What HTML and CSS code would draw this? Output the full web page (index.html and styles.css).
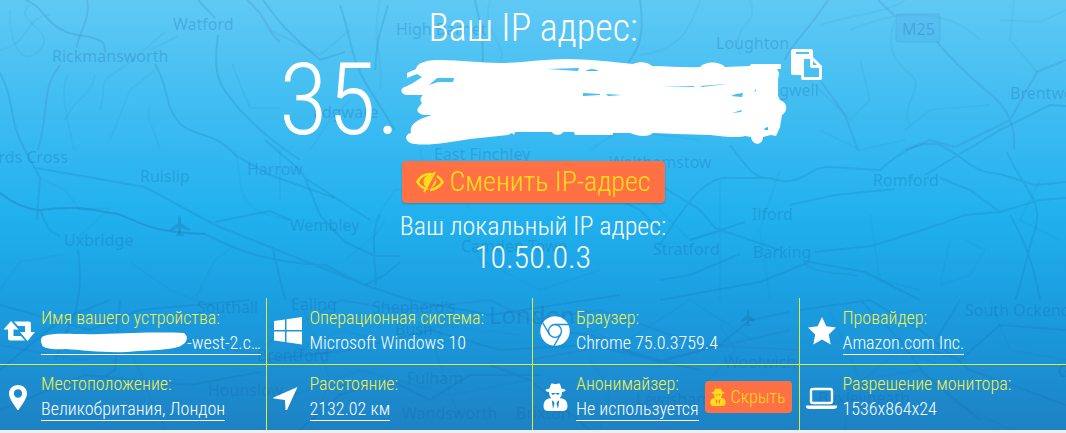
FILE: index.html
```html
<!DOCTYPE html>
<html lang="ru">
<head>
<meta charset="utf-8">
<meta name="viewport" content="width=device-width, initial-scale=1">
<title>Ваш IP адрес</title>
<link rel="stylesheet" href="styles.css">
</head>
<body>
<svg class="symbols" aria-hidden="true">
  <symbol id="spy" viewBox="0 0 24 28">
    <path fill="currentColor" fill-rule="evenodd" d="M7.500 1C8.600 0 10 1.200 12 1.200S15.400 0 16.500 1L18 5.500C20.500 6 22 6.600 22 7.300C22 8 20.700 8.600 18.500 9.100C18.400 12 17.600 14 16.200 15.300L19 15.600C22 16.500 24 19 24 23C24 26 22.500 28 19 28H5C1.500 28 0 26 0 23C0 19 2 16.500 5 15.600L7.800 15.300C6.400 14 5.600 12 5.500 9.100C3.300 8.600 2 8 2 7.300C2 6.600 3.500 6 6 5.500ZM8.300 17.300L9.500 26L11 20.500L10.300 18.700ZM15.700 17.300L13.700 18.700L13 20.500L14.500 26ZM8 10C8 12.300 10.800 12.300 11.400 10.500H12.600C13.200 12.300 16 12.300 16 10Z"/>
  </symbol>
</svg>
<main class="page">
  <svg class="map" viewBox="0 0 1066 430" preserveAspectRatio="xMidYMid slice" aria-hidden="true">
    <g class="roads minor">
      <path d="M10 10C8 40 22 70 40 50S10 20 30 5M68 75C60 90 65 110 74 150M100 110C110 75 90 90 130 62L165 32M150 50L178 36M232 64L250 108H280M150 105C145 120 155 130 160 150M380 0C370 40 385 60 380 90M490 0C480 30 510 50 500 60M700 0C690 30 680 50 640 55M740 55C730 20 760 30 750 0M905 0C890 12 850 15 820 25M850 30C920 0 960 20 980 40M895 20C880 60 910 70 915 80S900 110 910 125M1014 0L1010 40L1037 72"/>
      <path d="M40 178L65 190L80 210L110 208L78 238M0 290L20 262L65 254M130 262L170 290L220 310M15 345L90 310L130 350L165 430M195 300L215 260L235 245M235 150C245 190 230 210 290 220M280 150V200M375 220L395 190L420 188M345 260L375 235L385 220M420 150C430 200 460 180 470 210M465 230L480 260L540 290L600 270M650 200L690 240L720 232M720 180V300M780 170L760 230L770 300M870 215L880 280L920 290M965 240L985 250L970 275L940 285L950 240M820 130L860 150L905 140M1040 180L1020 220L1060 240"/>
      <path d="M270 325L300 350L340 330L400 345L440 325L520 335M280 400L360 370L450 395L530 380M300 300L330 380L310 430M450 300L435 350L460 420M570 320L620 345L690 300L760 345M600 310L590 360L610 390L600 430M720 325L735 350L700 390L790 400M830 310L860 380L920 370M845 430L850 390L900 350L940 365M990 300L1010 350L1066 360M950 400L1010 430"/>
      <path d="M0 50C30 45 25 15 50 15M65 120C80 90 90 100 95 75M110 140L130 90L155 70M270 30L320 55L350 30M310 150L330 120L350 100M590 150L620 130L700 140M810 80L850 120L870 100L860 60M905 130L930 110L990 105M1066 10L1040 22L1000 20"/>
    </g>
    <g class="roads">
      <path d="M25 0C45 5 45 30 78 35S102 45 106 53M155 64C170 90 163 100 177 120C190 138 215 130 235 155L270 175L335 198M218 35C212 80 220 85 240 110C260 130 270 140 300 160M198 0L215 18M263 0C290 40 320 58 320 60L345 52M340 5C352 40 350 60 370 90L395 130M388 5L378 40L375 70M475 0C480 20 485 50 482 70M640 0C645 35 640 50 622 70"/>
      <path d="M0 73C15 100 8 120 25 150L40 178L37 220M36 168L145 187L215 225L365 285L385 275L400 262M0 193Q20 209 40 210C80 205 90 210 118 214C140 222 148 232 205 234C235 250 270 263 325 265L365 285M40 210C45 220 45 230 60 236M215 222L270 211L290 220M265 140L300 170L305 178L320 215L345 242L375 256H400M305 178L370 220M380 215C370 230 375 260 376 285M273 250L285 300M78 250C80 270 82 280 76 310L55 360"/>
      <path d="M660 230L640 210L600 190M660 280L690 275L740 254M660 185L700 210L715 228L780 250M690 240L745 222M790 205L835 195L895 189M815 252L870 246Q920 232 965 215L1000 212L1040 200L1066 198M925 175L1000 130L1050 105L1066 106M1007 152C1020 185 1045 200 1035 230S1023 280 1015 300M1010 215C1025 240 1035 270 1040 300M1000 212L970 190L940 178M730 145C745 165 755 180 770 178M660 245C690 195 710 175 730 178H770C800 190 810 165 830 167L880 170C900 152 920 140 940 145C970 160 970 172 1000 174L1035 185L1066 182M660 300L760 282L810 262L865 272L900 290L920 300"/>
      <path d="M0 305L90 330L140 310L250 300M0 370L60 320L110 300M0 410L85 375L190 385L260 372M90 385L115 370L120 300M365 285L410 300L490 315L620 295M265 360L350 350L430 330L500 350L590 345L700 370M530 305C550 350 580 320 610 345L660 362L720 345L750 320L790 312M800 310L870 300L920 330L970 370L1066 405M860 300L900 340L925 375L980 420M960 300L930 350L960 360L1000 325L1066 330M300 430L340 395L390 380L430 400L470 375L540 375M490 365L530 380L590 430"/>
    </g>
    <g class="roads major">
      <path d="M87 0C92 18 75 40 77 48M60 65C40 90 50 110 38 150M247 0C270 20 265 30 280 42M878 0L895 16M937 42C960 70 980 85 995 98C1012 115 1015 130 1014 150M828 0C805 35 790 45 785 60M905 150L930 140L955 147L1010 120L1037 72L1066 60M820 80L845 115L858 150"/>
      <path d="M0 193Q20 209 40 210C80 205 90 210 118 214C140 222 148 232 205 234M805 264C820 275 840 272 858 276M0 345L80 360L190 340L260 355M265 345L340 300L400 310L490 300L530 320L600 310L700 345L800 350M530 360L610 345L660 360L790 330"/>
    </g>
    <path class="plane" d="M179 215l2 3v5l9 6v2l-9-3v5l3 2v1h-8v-1l2-2v-5l-8 3v-2l8-6v-5zM748 308l1 3v4l6 5v2l-6-2v4l2 2h-6l2-2v-4l-6 2v-2l6-5v-4z"/>
    <rect class="shield" x="896" y="14" width="44" height="28" rx="2"/>
    <g class="places">
      <text x="173" y="30">Watford</text><text x="52" y="62">Rickmansworth</text>
      <text x="396" y="35">High Barnet</text><text x="716" y="49">Loughton</text>
      <text x="902" y="35">M25</text><text x="1010" y="99">Brentwood</text>
      <text x="313" y="118">Edgware</text><text x="755" y="96">Chigwell</text>
      <text x="-44" y="163">Gerrards Cross</text><text x="140" y="182">Ruislip</text>
      <text x="247" y="175">Harrow</text><text x="290" y="231">Wembley</text>
      <text x="64" y="246">Uxbridge</text><text x="434" y="160">East Finchley</text>
      <text x="609" y="168">Walthamstow</text><text x="873" y="186">Romford</text>
      <text x="752" y="220">Ilford</text><text x="753" y="258">Barking</text>
      <text x="653" y="255">Stratford</text><text x="461" y="252">Camden Town</text>
      <text x="197" y="313">Southall</text><text x="291" y="310">Ealing</text>
      <text x="372" y="313">Shepherd's</text><text x="395" y="335">Bush</text>
      <text class="capital" x="489" y="324">London</text><text x="257" y="361">Brentford</text>
      <text x="208" y="396">Hounslow</text><text x="407" y="384">Fulham</text>
      <text x="402" y="419">Wandsworth</text><text x="516" y="419">Brixton</text>
      <text x="724" y="368">Woolwich</text><text x="636" y="405">Lewisham</text>
      <text x="818" y="404">Bexleyheath</text><text x="965" y="316">South Ockendon</text>
      <text x="1058" y="377">Grays</text>
    </g>
  </svg>

  <section class="hero">
    <h1 class="title">Ваш IP адрес:</h1>
    <div class="ip">
      <span class="ip-text">35.</span>
      <svg class="ip-cover" width="387" height="88" viewBox="0 0 387 88" aria-hidden="true">
        <path fill="#fff" fill-rule="evenodd" d="M7 16L16 12C17 8 20 6 24 5C30 3 35 3 40 3C60 3 80 6 100 6S145 2 167 2C185 2 215 5 233 7C240 4 248 5 252 9C270 9 285 11 300 10C305 4 320 4 325 10L350 9L351 7H381V12H377L379 16L378 23V39L380 43C388 46 388 54 382 58L380 70L376 79L371 78L363 80C363 89 352 89 351 80L345 79C340 81 325 80 310 78L277 77L253 76C249 80 239 80 230 76L213 76V78H175L174 75H163C161 79 154 79 152 75H115L114 78L112 76L108 78L70 82C50 85 30 89 15 87C4 86 4 77 11 76C9 68 17 63 26 60L32 58L27 58C19 58 16 54 18 51L22 46C19 42 21 40 23 38H7C0 37-1 31 7 29L13 26L22 20L17 17L7 21ZM29 28L37 21H54L53 25H38ZM147 12L179 11L178 14ZM185 14Q192 10 199 14ZM183 36L200 37V38L183 39ZM206 37L222 38L208 39ZM261 30L294 29V30ZM300 29L326 27L302 30ZM331 39L336 37L343 36L342 40ZM332 56L342 53L341 55ZM364 73L365 71L368 70V73ZM354 35L356 32V34Z"/>
      </svg>
      <button class="copy" type="button" aria-label="Скопировать">
        <svg width="31" height="31" viewBox="0 0 31 31" aria-hidden="true"><path fill="#fff" fill-rule="evenodd" d="M2 0H20C21 0 22 1 22 2V8L31 17V29C31 30 30 31 29 31H12C11 31 10 30 10 29V26H2C1 26 0 25 0 24V2C0 1 1 0 2 0ZM5 3V5H18V3ZM13 10V28H28V19H21C20 19 19 18 19 17V10ZM22 12V16H26Z"/></svg>
      </button>
    </div>
    <button class="change" type="button">
      <svg width="28" height="22" viewBox="0 0 28 22" aria-hidden="true">
        <path fill="none" stroke="currentColor" stroke-width="2.600" d="M12 18C6 17 3 14 1.500 11C4 6 8 3 14 3L17 3.500M21 5C24 7 25.500 9 26.500 11C24 15 21 18 14 19"/>
        <path fill="none" stroke="currentColor" stroke-width="2" d="M19 1L8 21"/>
        <path fill="currentColor" d="M14 4L16 5L10 16C5 12 8 4 14 4ZM20 8C21 12 19 15 15 17Z"/>
      </svg>
      <span>Сменить IP-адрес</span>
    </button>
    <p class="local-label">Ваш локальный IP адрес:</p>
    <p class="local-ip">10.50.0.3</p>
  </section>

  <section class="facts">
    <div class="fact">
      <svg class="icon" width="32" height="32" viewBox="0 0 32 32" aria-hidden="true"><path fill="#fff" d="M8 6L15.500 14.500H10.500V21H18L22 25.500H7C6 25.500 5 24.500 5 23.500V14.500H0.500ZM11 6.500H26C27 6.500 28 7.500 28 8.500V17H32L24.500 26L17 17H22V11H15Z"/></svg>
      <div class="info"><span class="label">Имя вашего устройства:</span>
        <a class="value host" href="#host"><svg width="146" height="21" viewBox="0 0 146 21" aria-hidden="true"><path fill="#fff" d="M3 4C15 0 35 3 60 2C90 1 120 0 143 1C148 5 146 10 141 13C135 18 110 18 85 20C65 21 40 18 25 17C10 18 2 16 1 13C-1 8 0 5 3 4Z"/></svg>-west-2.c…</a></div>
    </div>
    <div class="fact">
      <svg class="icon" width="32" height="32" viewBox="0 0 32 32" aria-hidden="true"><path fill="#fff" d="M2 6L13 4.500V15H2ZM14.500 4.200L30 2V15H14.500ZM2 16.500H13V27L2 25.500ZM14.500 16.500H30V29.500L14.500 27.300Z"/></svg>
      <div class="info"><span class="label">Операционная система:</span><span class="value">Microsoft Windows 10</span></div>
    </div>
    <div class="fact">
      <svg class="icon" width="32" height="32" viewBox="0 0 32 32" aria-hidden="true"><circle cx="17" cy="16" r="14.700" fill="#fff"/><g fill="none" stroke="#1c94d8" stroke-width="1.400"><circle cx="17" cy="16" r="6.500"/><path d="M17 9.500H31M11.400 19.200L4.500 7.500M22.600 19.300L16 31"/></g></svg>
      <div class="info"><span class="label">Браузер:</span><span class="value">Chrome 75.0.3759.4</span></div>
    </div>
    <div class="fact">
      <svg class="icon" width="32" height="32" viewBox="0 0 32 32" aria-hidden="true"><path fill="#fff" d="M17 2L21.300 11.300L31 12.500L23.800 19.500L25.700 29.500L17 24.500L8.300 29.500L10.200 19.500L3 12.500L12.700 11.300Z"/></svg>
      <div class="info"><span class="label">Провайдер:</span><a class="value" href="#provider">Amazon.com Inc.</a></div>
    </div>
    <div class="fact">
      <svg class="icon" width="32" height="32" viewBox="0 0 32 32" aria-hidden="true"><path fill="#fff" fill-rule="evenodd" d="M15 3C20 3 24 6.500 24 11.500C24 17 18 24 15.500 28H14.500C12 24 6 17 6 11.500C6 6.500 10 3 15 3ZM15 7.300A4.200 4.200 0 1 0 15 15.700A4.200 4.200 0 1 0 15 7.300Z"/></svg>
      <div class="info"><span class="label">Местоположение:</span><a class="value" href="#place">Великобритания, Лондон</a></div>
    </div>
    <div class="fact">
      <svg class="icon" width="32" height="32" viewBox="0 0 32 32" aria-hidden="true"><path fill="#fff" d="M25.500 5L15 28H13.500L13 18L1.500 16.500V15.500Z"/></svg>
      <div class="info"><span class="label">Расстояние:</span><a class="value" href="#distance">2132.02 км</a></div>
    </div>
    <div class="fact">
      <svg class="icon" width="32" height="32" viewBox="0 0 32 32" aria-hidden="true"><use href="#spy" x="5" y="1" width="25" height="28"/></svg>
      <div class="info"><span class="label">Анонимайзер:</span><a class="value" href="#proxy">Не используется</a></div>
      <button class="hide" type="button"><svg width="16" height="18" aria-hidden="true"><use href="#spy"/></svg><span>Скрыть</span></button>
    </div>
    <div class="fact">
      <svg class="icon" width="32" height="32" viewBox="0 0 32 32" aria-hidden="true"><rect x="6" y="7" width="21" height="14" rx="2" fill="none" stroke="#fff" stroke-width="2.400"/><path fill="#fff" d="M1 23.500H32V25C32 26 30 27 28.500 27H4.500C3 27 1 26 1 25Z"/></svg>
      <div class="info"><span class="label">Разрешение монитора:</span><span class="value">1536x864x24</span></div>
    </div>
  </section>
</main>
</body>
</html>
```

FILE: styles.css
```css
* { box-sizing: border-box; }

body {
  margin: 0;
  background: #eee;
  color: #fff;
  font-family: "Roboto Condensed", Roboto, "Liberation Sans", sans-serif;
  font-weight: 300;
}

button {
  border: 0;
  margin: 0;
  font: inherit;
  cursor: pointer;
}

.symbols { position: absolute; width: 0; height: 0; }

.page {
  position: relative;
  overflow: hidden;
  background: linear-gradient(#60c9f5 0%, #4bc1f2 16%, #35b8f1 34%, #21b1ee 50%, #1ba0e2 68%, #1b92d6 83%, #1d82c3 100%);
}

.map {
  position: absolute;
  inset: 0;
  width: 100%;
  height: 100%;
}

.roads {
  fill: none;
  stroke: #145f9d;
  stroke-opacity: 0.15;
  stroke-width: 2;
  stroke-linejoin: round;
}
.minor { stroke-opacity: 0.06; }
.major { stroke: #3d62ad; stroke-opacity: 0.16; }
.plane { fill: #155f9f; fill-opacity: 0.25; }
.shield { fill: #3a83c4; fill-opacity: 0.1; stroke: #3a70b0; stroke-opacity: 0.15; }

.places {
  fill: #1565a8;
  fill-opacity: 0.28;
  font: 400 16px "Noto Sans", sans-serif;
}
.capital { font-size: 24px; }

.hero {
  position: relative;
  display: flex;
  flex-direction: column;
  align-items: center;
  padding-top: 6px;
}

.title { margin: 0; font-size: 38px; line-height: 44px; font-weight: 300; }

.ip { position: relative; display: flex; align-items: center; height: 100px; }
.ip-text { font-size: 100px; line-height: 100px; }
.ip-cover { margin-top: 2px; }
.copy {
  position: absolute;
  left: 100%;
  top: -1px;
  padding: 0;
  margin-left: 4px;
  background: none;
}
.copy svg { display: block; }

.change {
  display: flex;
  align-items: center;
  gap: 6px;
  margin-top: 11px;
  padding: 0 14px;
  border-radius: 4px;
  background: #ff7044;
  color: #ffde17;
  font-size: 28px;
  line-height: 42px;
  box-shadow: 0 1px 2px rgba(0, 60, 110, 0.3);
}

.local-label { margin: 8px 0 0; font-size: 26px; line-height: 30px; }
.local-ip { margin: 0; font-size: 32px; line-height: 32px; }

.facts {
  position: relative;
  display: grid;
  grid-template-columns: repeat(4, minmax(0, 1fr));
  margin-top: 25px;
}

.fact {
  display: flex;
  align-items: center;
  gap: 6px;
  min-height: 65px;
  padding: 4px 0 8px 5px;
  font-size: 18px;
  border-right: 1px solid #e0ea30;
}
.fact:nth-child(-n + 4) { min-height: 67px; border-bottom: 1px solid #e0ea30; }
.fact:nth-child(4n + 1) { padding-left: 3px; }
.fact:nth-child(4n) { border-right: 0; }

.icon { flex: none; margin-top: 4px; }
.info { display: flex; flex-direction: column; align-items: flex-start; white-space: nowrap; }
.label { color: #f3ee4a; line-height: 27px; }
.value { color: #fff; line-height: 23px; border-bottom: 1px solid transparent; text-decoration: none; }
a.value { border-bottom-color: #fff; }
.host { display: flex; align-items: center; }

.hide {
  display: flex;
  align-items: center;
  gap: 5px;
  margin-top: 2px;
  padding: 0 6px 0 5px;
  border-radius: 4px;
  background: #ff7044;
  color: #ffde17;
  line-height: 32px;
}
```
